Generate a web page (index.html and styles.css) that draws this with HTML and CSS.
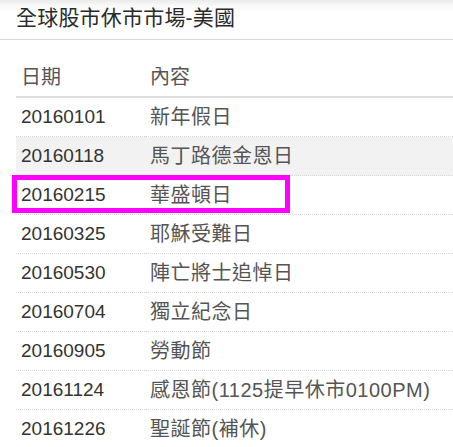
FILE: index.html
```html
<!DOCTYPE html>
<html lang="zh-Hant">
<head>
    <meta charset="UTF-8">
    <meta name="viewport" content="width=device-width, initial-scale=1.0">
    <title>全球股市休市市場-美國</title>
    <link rel="stylesheet" href="styles.css">
</head>
<body>
    <div class="panel">
        <div class="panel-heading">
            <h3 class="panel-title">全球股市休市市場-美國</h3>
        </div>

        <table class="holiday-table">
            <thead>
                <tr>
                    <th class="col-date">日期</th>
                    <th>內容</th>
                </tr>
            </thead>
            <tbody>
                <tr>
                    <td class="col-date">20160101</td>
                    <td>新年假日</td>
                </tr>
                <tr class="striped">
                    <td class="col-date">20160118</td>
                    <td>馬丁路德金恩日</td>
                </tr>
                <tr class="marked">
                    <td class="col-date">20160215</td>
                    <td>華盛頓日</td>
                </tr>
                <tr>
                    <td class="col-date">20160325</td>
                    <td>耶穌受難日</td>
                </tr>
                <tr>
                    <td class="col-date">20160530</td>
                    <td>陣亡將士追悼日</td>
                </tr>
                <tr>
                    <td class="col-date">20160704</td>
                    <td>獨立紀念日</td>
                </tr>
                <tr>
                    <td class="col-date">20160905</td>
                    <td>勞動節</td>
                </tr>
                <tr>
                    <td class="col-date">20161124</td>
                    <td>感恩節(1125提早休市0100PM)</td>
                </tr>
                <tr>
                    <td class="col-date">20161226</td>
                    <td>聖誕節(補休)</td>
                </tr>
            </tbody>
        </table>
    </div>
</body>
</html>
```

FILE: styles.css
```css
*, *::before, *::after {
    box-sizing: border-box;
    margin: 0;
    padding: 0;
}

body {
    background-color: #fff;
    font-family: 'Liberation Sans', 'Noto Sans CJK TC', sans-serif;
    color: #333;
    overflow: hidden;
}

.panel-heading {
    height: 40px;
    padding: 4px 16px 0;
    background: linear-gradient(to bottom, #ebebeb 0px, #fafafa 6px, #fff 12px);
    border-bottom: 1px solid #d6d6d6;
}

.panel-title {
    font-size: 21px;
    font-weight: 400;
    line-height: 27px;
    letter-spacing: 0.2px;
    color: #2a2a2a;
}

.holiday-table {
    margin: 18px 0 0 16px;
    width: calc(100% - 16px);
    table-layout: fixed;
    border-collapse: collapse;
    font-size: 20px;
}

.holiday-table th,
.holiday-table td {
    padding: 8px 5px;
    line-height: 22px;
    text-align: left;
    vertical-align: middle;
    white-space: nowrap;
}

.holiday-table th {
    font-weight: 400;
    color: #555;
    border-bottom: 2px solid #ddd;
}

.holiday-table td {
    border-top: 1px dotted #d9d9d9;
    color: #555;
    letter-spacing: 0.5px;
}

.holiday-table td.col-date {
    font-size: 19px;
    letter-spacing: 0;
    color: #333;
}

.col-date {
    width: 129px;
}

.holiday-table tr.striped td {
    background-color: #f2f2f2;
}

.holiday-table tr.marked td:first-child {
    position: relative;
}

/* annotation box drawn over the row */
.holiday-table tr.marked td:first-child::after {
    content: '';
    position: absolute;
    left: -4px;
    top: -1px;
    width: 278px;
    height: 38px;
    border: 5px solid #ff00ff;
}
```
